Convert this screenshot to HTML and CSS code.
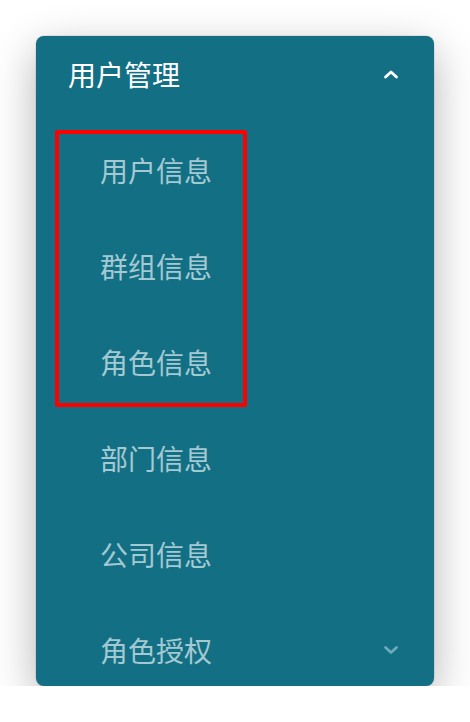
FILE: index.html
```html
<!DOCTYPE html>
<html lang="zh-CN">
<head>
<meta charset="utf-8">
<link rel="stylesheet" href="styles.css">
</head>
<body>
<div class="stage">
  <nav class="panel">
    <div class="group-head">
      <span class="group-title">用户管理</span>
      <svg class="chev chev-up" width="16" height="10" viewBox="0 0 16 10"><path d="M2.5 8 L8 3 L13.5 8" fill="none" stroke="currentColor" stroke-width="2.8" stroke-linecap="round" stroke-linejoin="round"/></svg>
    </div>
    <ul class="items">
      <li class="item">用户信息</li>
      <li class="item">群组信息</li>
      <li class="item">角色信息</li>
      <li class="item">部门信息</li>
      <li class="item">公司信息</li>
      <li class="item item-sub">
        <span>角色授权</span>
        <svg class="chev chev-down" width="16" height="10" viewBox="0 0 16 10"><path d="M2.5 2.5 L8 7.5 L13.5 2.5" fill="none" stroke="currentColor" stroke-width="2.8" stroke-linecap="round" stroke-linejoin="round"/></svg>
      </li>
    </ul>
    <div class="highlight"></div>
  </nav>
</div>
</body>
</html>
```
FILE: styles.css
```css
html, body {
  margin: 0;
  padding: 0;
  background: #ffffff;
}
body {
  font-family: "Noto Sans CJK SC", "Noto Sans", sans-serif;
}
.stage {
  padding: 36px 0 0 36px;
}
.panel {
  position: relative;
  width: 398px;
  height: 650px;
  background: #136f84;
  border-radius: 8px;
  overflow: hidden;
  box-shadow: 0 14px 44px rgba(0, 0, 0, 0.3), 0 0 0 0.5px rgba(0,0,0,0.15);
}
.group-head {
  height: 76px;
  display: flex;
  align-items: center;
  justify-content: space-between;
  padding: 0 35px 0 32px;
  color: #ffffff;
}
.group-title {
  font-size: 28px;
  line-height: 1;
  font-weight: 400;
}
.chev {
  display: block;
}
.chev-up {
  color: #ffffff;
}
.items {
  list-style: none;
  margin: 10px 0 0 0;
  padding: 0;
}
.item {
  height: 96px;
  display: flex;
  align-items: center;
  justify-content: space-between;
  padding: 0 35px 0 64px;
  font-size: 28px;
  line-height: 1;
  font-weight: 400;
  color: #a3c9d2;
}
.chev-down {
  color: #6aaab9;
}
.highlight {
  position: absolute;
  left: 19px;
  top: 94px;
  width: 184px;
  height: 269px;
  border: 4px solid #ff0000;
  border-radius: 2px;
}
```
